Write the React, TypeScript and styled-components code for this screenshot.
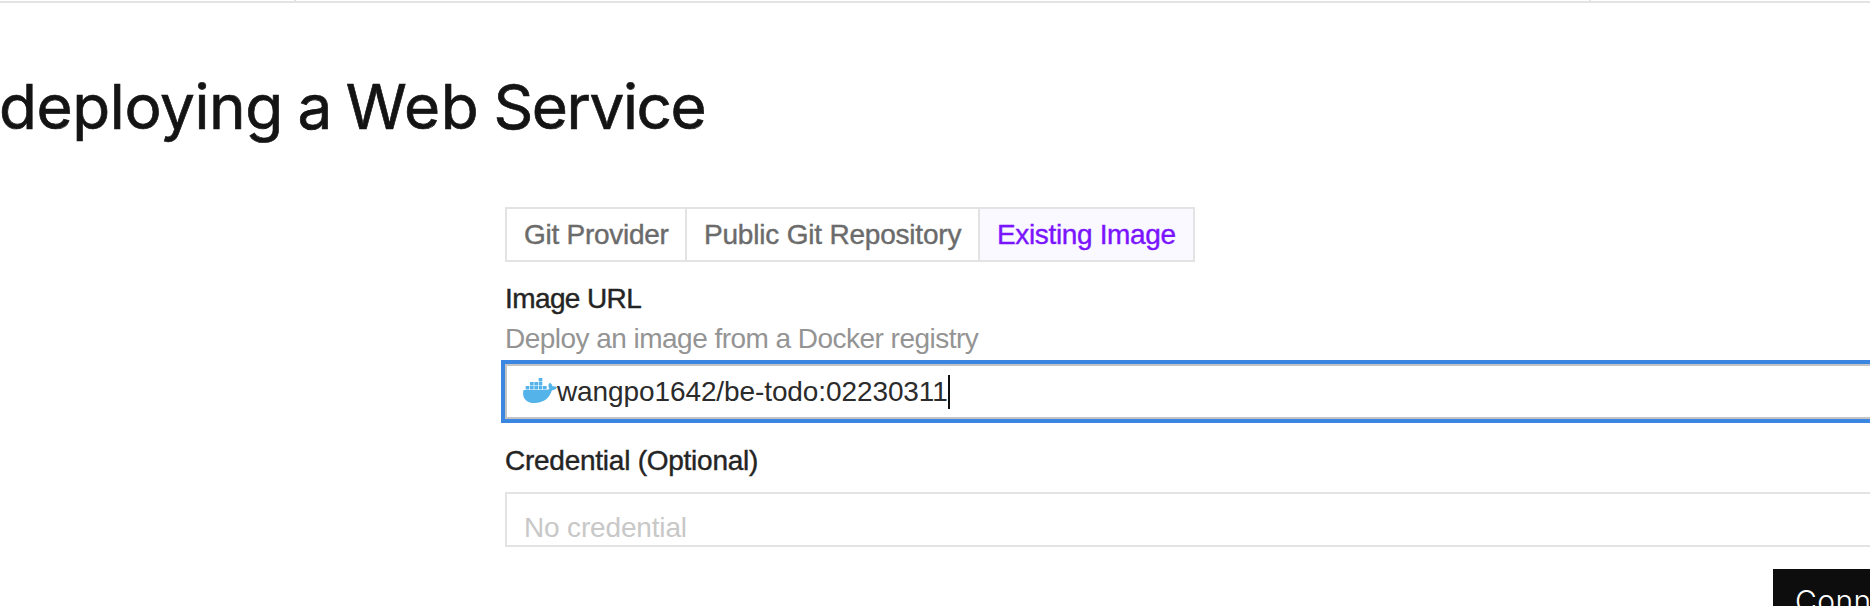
import React from 'react';
import styled, { createGlobalStyle } from 'styled-components';

const GlobalStyle = createGlobalStyle`
  * { box-sizing: border-box; }
  html, body { margin: 0; height: 606px; overflow: hidden; background: #fff; }
  body { font-family: "Liberation Sans", Arial, sans-serif; font-size: 28px; }
`;

const Page = styled.main`
  width: 1870px;
  height: 606px;
  overflow: hidden;
  display: flex;
  flex-direction: column;
`;

const NavEdge = styled.header`
  display: flex;
  flex: none;
  height: 3px;
  border-bottom: 2px solid #e3e3e3;
`;

const NavCell = styled.div<{ $width: number }>`
  flex: none;
  width: ${p => p.$width}px;
  border-right: 2px solid #e3e3e3;
`;

const Title = styled.h1`
  margin: 65px 0 0 -1px;
  height: 77px;
  line-height: 77px;
  font-family: Inter, sans-serif;
  font-size: 62px;
  font-weight: 400;
  letter-spacing: -0.9px;
  word-spacing: -2.1px;
  color: #141414;
  -webkit-text-stroke: 0.7px #141414;
  white-space: nowrap;
`;

const Word = styled.span<{ $spacing: number }>`
  letter-spacing: ${p => p.$spacing}px;
`;

const Form = styled.form`
  display: flex;
  flex-direction: column;
  margin: 62px 0 0 505px;
  width: 1500px;
`;

const Tabs = styled.div`
  display: flex;
  height: 55px;
`;

const Tab = styled.button<{ $width: number; $active?: boolean; $spacing: number }>`
  flex: none;
  width: ${p => p.$width}px;
  padding: 0 0 0 17px;
  border: 2px solid #e3e3e3;
  background: ${p => (p.$active ? '#faf9ff' : '#fff')};
  color: ${p => (p.$active ? '#7a14ff' : '#6b6b6b')};
  -webkit-text-stroke: 0.4px currentColor;
  font: inherit;
  line-height: 51px;
  letter-spacing: ${p => p.$spacing}px;
  text-align: left;
  white-space: nowrap;
  & + & { margin-left: -2px; }
`;

const Label = styled.label<{ $spacing: number; $top: number }>`
  margin-top: ${p => p.$top}px;
  height: 40px;
  line-height: 40px;
  color: #242424;
  -webkit-text-stroke: 0.4px currentColor;
  letter-spacing: ${p => p.$spacing}px;
`;

const Hint = styled.p`
  margin: 0;
  height: 40px;
  line-height: 40px;
  color: #949494;
  letter-spacing: -0.53px;
`;

const Field = styled.div<{ $focused?: boolean; $top: number }>`
  display: flex;
  margin-top: ${p => p.$top}px;
  height: 55px;
  padding-left: 16px;
  border: 2px solid ${p => (p.$focused ? '#c4c4c4' : '#e3e3e3')};
  box-shadow: ${p => (p.$focused ? '0 0 0 4px #3b86e0' : 'none')};
  line-height: 52px;
  color: #2b2b2b;
  overflow: hidden;
`;

const Whale = styled.svg`
  flex: none;
  width: 34px;
  height: 25px;
  margin-top: 12px;
  fill: #54b3e8;
`;

const Value = styled.span`
  letter-spacing: -0.1px;
`;

const Caret = styled.span`
  width: 2px;
  height: 34px;
  margin-top: 9px;
  background: #111;
`;

const Placeholder = styled.span`
  padding: 8px 0 0 1px;
  color: #c8c8c8;
  letter-spacing: -0.16px;
`;

const Connect = styled.button`
  margin: 22px 0 0 1268px;
  width: 180px;
  height: 64px;
  padding: 0 0 0 22px;
  border: 0;
  background: #0d0d0d;
  color: #fff;
  font-family: Inter, sans-serif;
  font-size: 30px;
  font-weight: 300;
  letter-spacing: 0.4px;
  line-height: 63px;
  text-align: left;
`;

const containers = [
  [47, 0],
  [21, 12], [34, 12], [47, 12],
  [8, 24], [21, 24], [34, 24], [47, 24], [60, 24],
];

function DockerLogo() {
  return (
    <Whale viewBox="0 0 102 75" aria-hidden="true">
      {containers.map(([x, y]) => (
        <rect key={`${x}-${y}`} x={x} y={y} width="11" height="10.5" />
      ))}
      <path d="M3 36H68C74 36 78 34 79 31C75 26 75 19 80 14C85 17 88 20 88 25C93 24 98 25 102 28C99 34 94 37 87 37C78 62 62 75 35 75C10 75-3 60 1 39Q1 36 3 36Z" />
    </Whale>
  );
}

export default function App() {
  return (
    <>
      <GlobalStyle />
      <Page>
        <NavEdge>
          <NavCell $width={296} />
          <NavCell $width={1295} />
        </NavEdge>
        <Title>
          <Word $spacing={-0.4}>deploying</Word> a <Word $spacing={0.4}>Web</Word>{' '}
          <Word $spacing={-1.4}>Service</Word>
        </Title>
        <Form>
          <Tabs>
            <Tab type="button" $width={182} $spacing={-0.27}>Git Provider</Tab>
            <Tab type="button" $width={295} $spacing={-0.2}>Public Git Repository</Tab>
            <Tab type="button" $width={217} $spacing={-0.35} $active>Existing Image</Tab>
          </Tabs>
          <Label $top={17} $spacing={-0.6}>Image URL</Label>
          <Hint>Deploy an image from a Docker registry</Hint>
          <Field $top={5} $focused>
            <DockerLogo />
            <Value>wangpo1642/be-todo:02230311</Value>
            <Caret />
          </Field>
          <Label $top={22} $spacing={-0.25}>Credential (Optional)</Label>
          <Field $top={11}>
            <Placeholder>No credential</Placeholder>
          </Field>
          <Connect type="button">Connect</Connect>
        </Form>
      </Page>
    </>
  );
}
